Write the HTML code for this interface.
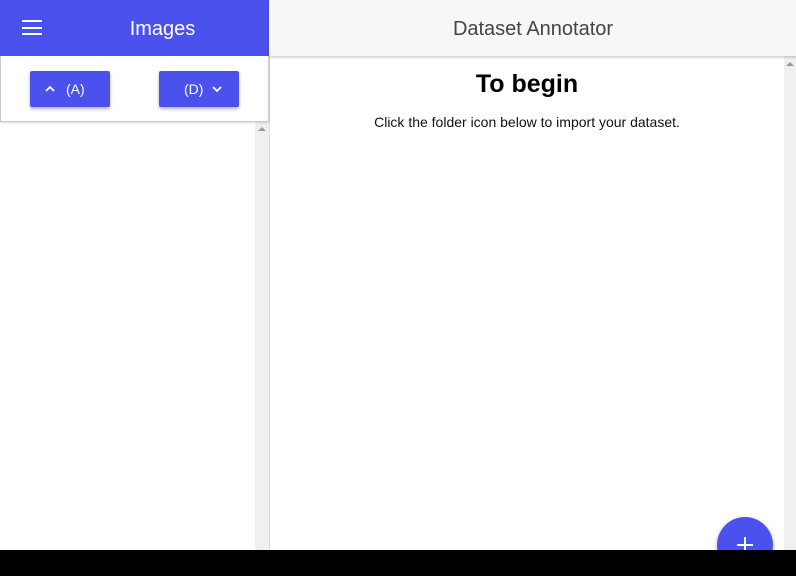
<!DOCTYPE html>
<html><head><style>
body{margin:0;width:796px;height:576px;overflow:hidden;background:#fff;font-family:"Liberation Sans",sans-serif;position:relative}
div{position:absolute;box-sizing:border-box}
.btn{background:#4b51ec;color:#fff;font-size:14px;border-radius:2px;box-shadow:0 2px 3px rgba(0,0,0,.3);height:36px;top:71px;line-height:36px;width:80px}
</style></head><body>
<div style="left:0;top:0;width:269px;height:56px;background:#4b51ec"></div>
<div style="left:22px;top:20px;width:20px;height:2px;background:#fff"></div>
<div style="left:22px;top:27px;width:20px;height:2px;background:#fff"></div>
<div style="left:22px;top:33px;width:20px;height:2px;background:#fff"></div>
<div style="left:90px;top:16px;width:145px;text-align:center;color:#fff;font-size:20px;line-height:26px">Images</div>
<div style="left:269px;top:0;width:527px;height:56px;background:#f7f7f7;box-shadow:0 1px 3px rgba(0,0,0,.25);z-index:2"></div>
<div style="left:270px;top:16px;width:526px;text-align:center;color:#444;font-size:20px;line-height:26px;z-index:3">Dataset Annotator</div>
<div style="left:0;top:56px;width:269px;height:66px;border:1px solid #ccc;border-top:none;box-shadow:0 1px 2px rgba(0,0,0,.15);background:#fff;z-index:1"></div>
<div class="btn" style="left:30px;z-index:2"><svg width="80" height="36" style="position:absolute;left:0;top:0"><path d="M16 20l4-4 4 4" stroke="#fff" stroke-width="1.8" fill="none"/></svg><span style="position:absolute;left:36px">(A)</span></div>
<div class="btn" style="left:159px;z-index:2"><span style="position:absolute;left:25px">(D)</span><svg width="80" height="36" style="position:absolute;left:0;top:0"><path d="M54 16l4 4 4-4" stroke="#fff" stroke-width="1.8" fill="none"/></svg></div>
<div style="left:255px;top:122px;width:14px;height:428px;background:#f0f0f0"></div>
<div style="left:269px;top:56px;width:1px;height:494px;background:#ddd"></div>
<div style="left:258px;top:127px;width:0;height:0;border:4px solid transparent;border-bottom:4px solid #999;border-top:none"></div>
<div style="left:784px;top:56px;width:12px;height:494px;background:#f0f0f0"></div>
<div style="left:786px;top:62px;width:0;height:0;border:4px solid transparent;border-bottom:4px solid #999;border-top:none"></div>
<div style="left:270px;top:68px;width:514px;text-align:center;font-size:25px;font-weight:bold;line-height:32px;color:#000">To begin</div>
<div style="left:270px;top:113px;width:514px;text-align:center;font-size:14px;line-height:18px;color:#111">Click the folder icon below to import your dataset.</div>
<div style="left:717px;top:517px;width:56px;height:56px;border-radius:50%;background:#4b51ec;box-shadow:0 2px 5px rgba(0,0,0,.3)"></div>
<div style="left:737px;top:544px;width:16px;height:2px;background:#fff"></div>
<div style="left:744px;top:537px;width:2px;height:16px;background:#fff"></div>
<div style="left:0;top:550px;width:796px;height:26px;background:#000;z-index:5"></div>
</body></html>
